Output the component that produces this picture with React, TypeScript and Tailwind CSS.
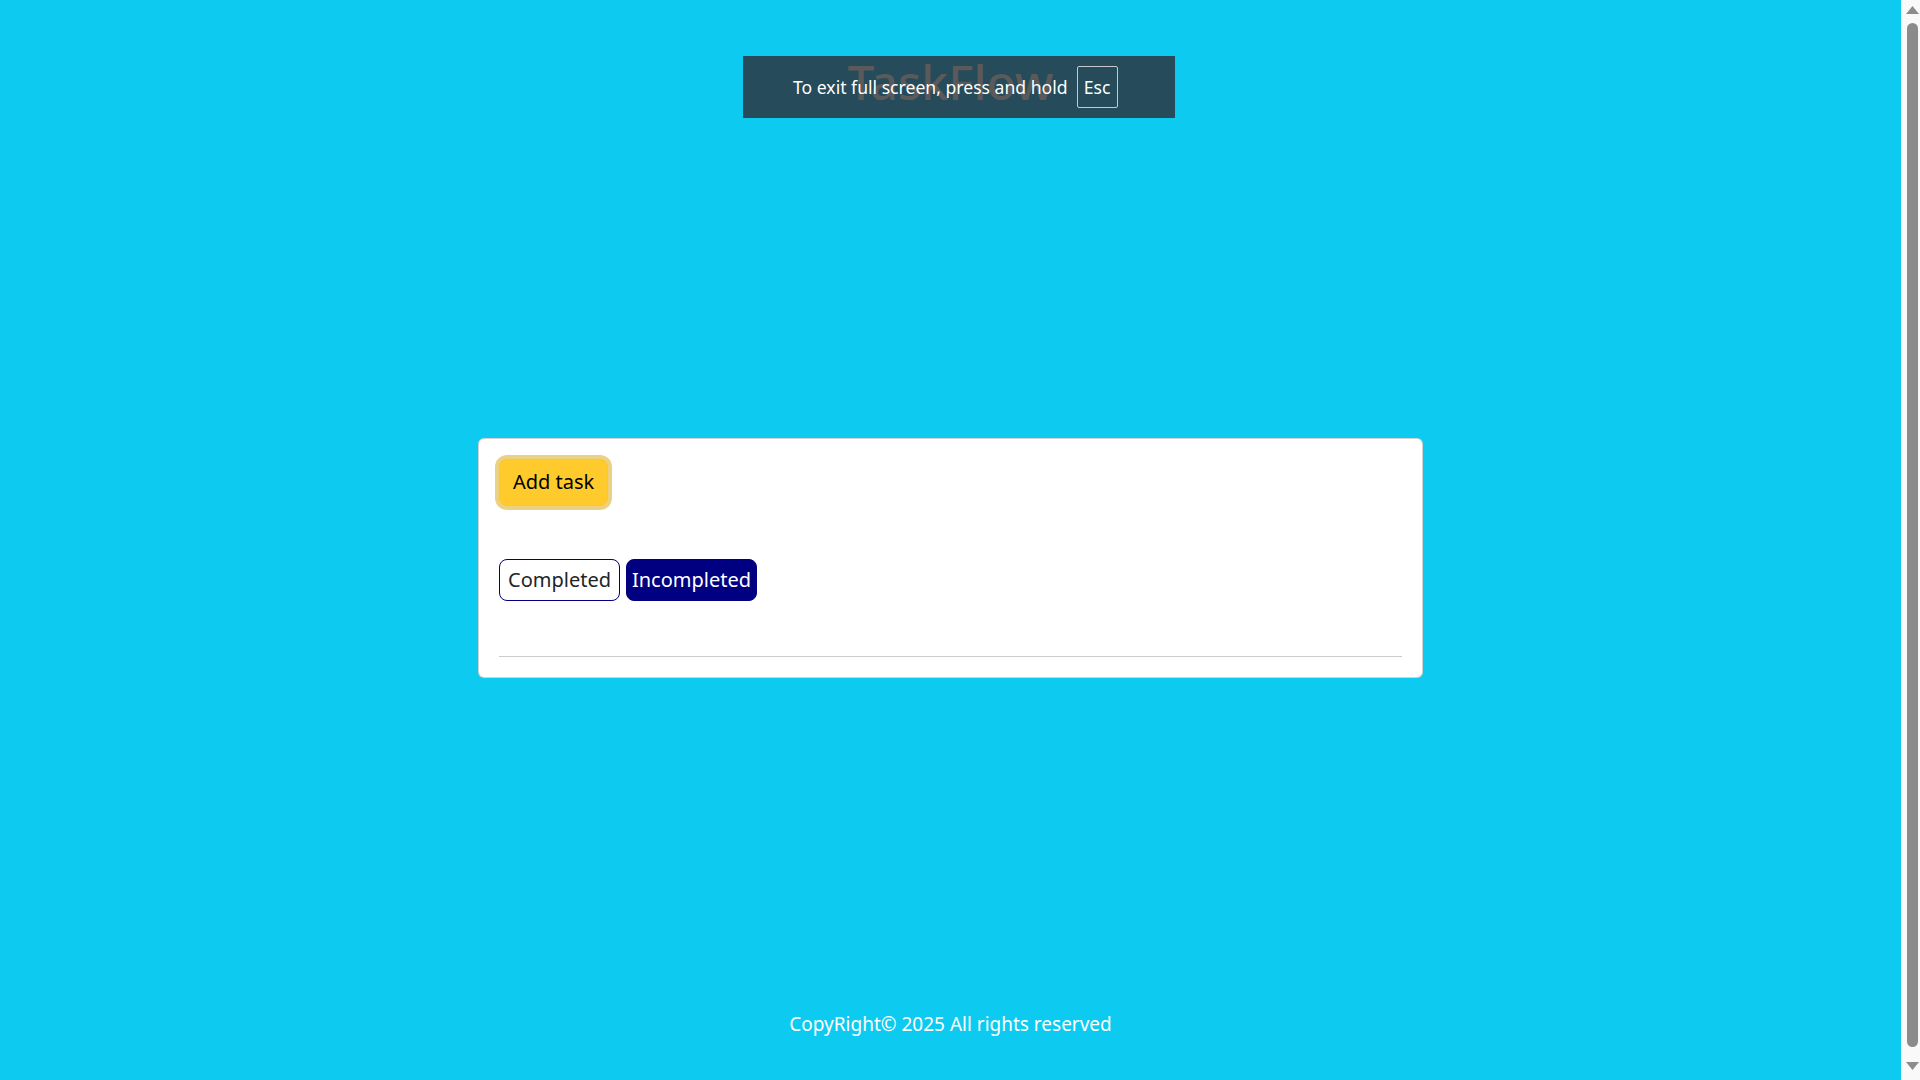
import React from "react";

const FONT = { fontFamily: '"Noto Sans", "Open Sans", sans-serif' } as const;

function FakeScrollbar() {
  return (
    <div className="w-[19px] h-full bg-[#f9f9f9] flex flex-col items-center shrink-0">
      <div className="h-[23px] w-full flex items-center justify-center">
        <svg width="13" height="8" viewBox="0 0 13 8" className="mt-[-4px] ml-[3px]">
          <polygon points="6.5,0 13,8 0,8" fill="#8c8c8c" />
        </svg>
      </div>
      <div className="flex-1 w-[11px] ml-[3px] rounded-full bg-[#8b8b8b]" />
      <div className="h-[33px] w-full flex items-center justify-center">
        <svg width="13" height="8" viewBox="0 0 13 8" className="mt-[4px] ml-[3px]">
          <polygon points="0,0 13,0 6.5,8" fill="#8c8c8c" />
        </svg>
      </div>
    </div>
  );
}

export default function App() {
  return (
    <div className="relative flex h-screen w-full overflow-hidden bg-[#0dcaf0]" style={FONT}>
      {/* fullscreen toast background */}
      <div className="absolute left-[743px] top-[56px] z-10 h-[62px] w-[432px] bg-[#264b5a]" />

      <div className="flex min-w-0 flex-1 flex-col">
        <header className="relative z-20 h-[130px] pt-[58px] text-center">
          <h1 className="text-[48px] font-medium leading-none text-[#5a5a5a]">TaskFlow</h1>
        </header>

        <main className="flex flex-1 items-center justify-center">
          <div className="w-[945px] rounded-[6px] border border-black/[0.175] bg-white p-5">
            <button className="h-[47px] rounded-[8px] border border-[#ffc720] bg-[#ffca2c] px-[13px] text-[20px] leading-none text-black shadow-[0_0_0_4px_rgba(217,164,6,0.5)]">
              Add task
            </button>
            <div className="mt-[53px] flex gap-[6px]">
              <button className="h-[42px] rounded-[8px] border border-[#000080] bg-white px-[8px] text-[20px] leading-none text-[#212529]">
                Completed
              </button>
              <button className="h-[42px] rounded-[8px] border border-[#000080] bg-[#000080] px-[5px] text-[20px] leading-none text-white">
                Incompleted
              </button>
            </div>
            <hr className="mt-[55px] border-0 border-t border-[#cccccc]" />
          </div>
        </main>

        <footer className="h-[95px] pt-[25px] text-center text-[19px] leading-[28px] text-white">
          CopyRight© 2025 All rights reserved
        </footer>
      </div>

      {/* fullscreen toast content */}
      <div className="absolute left-[743px] top-[56px] z-30 flex h-[62px] w-[432px] items-center pl-[50px]">
        <span className="mt-[2px] text-[17.6px] leading-none text-white">To exit full screen, press and hold</span>
        <span className="ml-[9px] flex h-[42px] w-[41px] items-center justify-center rounded-[2px] border border-[#c8c8c8] pt-[2px] text-[17.6px] leading-none text-white">
          Esc
        </span>
      </div>

      <FakeScrollbar />
    </div>
  );
}
